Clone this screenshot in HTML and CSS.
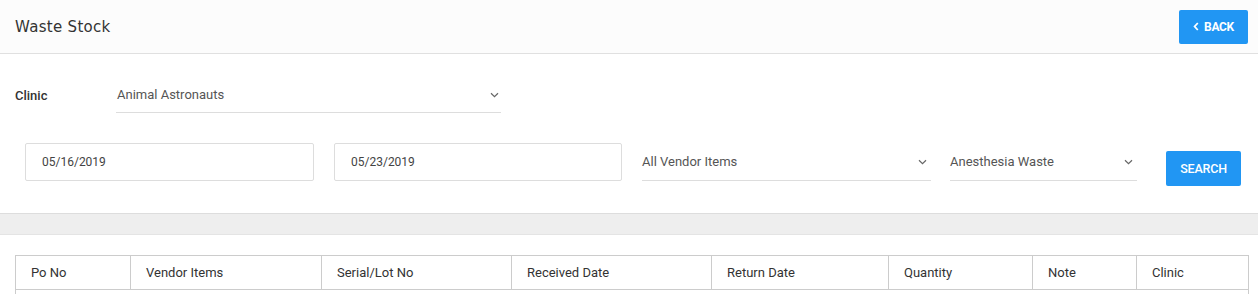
FILE: index.html
```html
<!DOCTYPE html>
<html>
<head>
<meta charset="utf-8">
<link rel="stylesheet" href="styles.css">
</head>
<body>
<header class="topbar">
  <h1 class="title">Waste Stock</h1>
  <button class="btn btn-back"><svg class="chev-left" width="6" height="9" viewBox="0 0 6 9"><path d="M4.8 1 L1.6 4.5 L4.8 8" fill="none" stroke="#fff" stroke-width="1.8"/></svg>BACK</button>
</header>
<section class="filters">
  <div class="clinic-row">
    <label class="clinic-label">Clinic</label>
    <div class="select select-clinic"><span>Animal Astronauts</span><svg class="chev" width="9" height="6" viewBox="0 0 9 6"><path d="M1 1.2 L4.5 4.6 L8 1.2" fill="none" stroke="#666" stroke-width="1.2"/></svg></div>
  </div>
  <div class="search-row">
    <div class="date-input">05/16/2019</div>
    <div class="date-input date-2">05/23/2019</div>
    <div class="select select-vendor"><span>All Vendor Items</span><svg class="chev" width="9" height="6" viewBox="0 0 9 6"><path d="M1 1.2 L4.5 4.6 L8 1.2" fill="none" stroke="#666" stroke-width="1.2"/></svg></div>
    <div class="select select-type"><span>Anesthesia Waste</span><svg class="chev" width="9" height="6" viewBox="0 0 9 6"><path d="M1 1.2 L4.5 4.6 L8 1.2" fill="none" stroke="#666" stroke-width="1.2"/></svg></div>
    <button class="btn btn-search">SEARCH</button>
  </div>
</section>
<div class="band"></div>
<section class="results">
  <table class="grid">
    <thead>
      <tr>
        <th class="c1">Po No</th>
        <th class="c2">Vendor Items</th>
        <th class="c3">Serial/Lot No</th>
        <th class="c4">Received Date</th>
        <th class="c5">Return Date</th>
        <th class="c6">Quantity</th>
        <th class="c7">Note</th>
        <th class="c8">Clinic</th>
      </tr>
    </thead>
    <tbody>
      <tr><td colspan="8"></td></tr>
    </tbody>
  </table>
</section>
</body>
</html>
```

FILE: styles.css
```css
* { box-sizing: border-box; }
html, body { margin: 0; padding: 0; background: #fff; }
body { font-family: Roboto, "Noto Sans", sans-serif; font-size: 13px; color: #333; }

.topbar {
  height: 54px;
  background: #fcfcfc;
  border-bottom: 1px solid #e0e0e0;
  display: flex;
  align-items: center;
  justify-content: space-between;
  padding: 0 10px 0 15px;
}
.title {
  margin: 0;
  font-family: "DejaVu Sans", sans-serif;
  font-weight: normal;
  font-size: 15px;
  color: #333;
  letter-spacing: 0.3px;
  position: relative;
  top: 0;
}
.btn {
  border: 0;
  background: #2196f3;
  color: #fff;
  font-family: Roboto, sans-serif;
  font-weight: 700;
  font-size: 12px;
  border-radius: 2px;
  cursor: pointer;
  display: inline-flex;
  align-items: center;
  justify-content: center;
}
.btn-back {
  width: 69px;
  height: 34px;
  margin-top: 0;
  gap: 5px;
  padding: 0;
  letter-spacing: -0.3px;
}
.filters { padding: 24px 0 27px; }
.clinic-row {
  display: flex;
  align-items: stretch;
  padding-left: 15px;
  height: 35px;
}
.clinic-label {
  width: 101px;
  font-weight: 500;
  display: flex;
  align-items: center;
  font-size: 13px;
  color: #333;
}
.select {
  display: flex;
  align-items: center;
  justify-content: space-between;
  border-bottom: 1px solid #ddd;
  color: #555;
  font-size: 13px;
}
.select-clinic { width: 385px; padding: 0 1px 1px 1px; }
.select-clinic .chev { margin-right: 1px; }
.search-row {
  display: flex;
  align-items: flex-start;
  margin-top: 30px;
  padding-left: 25px;
}
.date-input {
  width: 289px;
  height: 38px;
  border: 1px solid #ddd;
  border-radius: 2px;
  padding: 0 16px;
  display: flex;
  align-items: center;
  color: #444;
  font-size: 12px;
}
.date-2 { margin-left: 20px; width: 288px; }
.select-vendor { width: 289px; height: 38px; margin-left: 20px; padding-right: 4px; }
.select-type { width: 187px; height: 38px; margin-left: 19px; padding-right: 4px; }
.btn-search {
  width: 75px;
  height: 35px;
  margin-left: 29px;
  margin-top: 8px;
  font-size: 12.5px;
  font-weight: 500;
  letter-spacing: -0.2px;
}
.band {
  height: 22px;
  background: #eee;
  border-top: 1px solid #ddd;
  border-bottom: 1px solid #e4e4e4;
}
.results { padding: 20px 10px 0 15px; }
.grid {
  width: 1233px;
  border-collapse: collapse;
  table-layout: fixed;
}
.grid th {
  text-align: left;
  font-weight: normal;
  height: 34px;
  padding: 0 15px;
  border: 1px solid #ccc;
  color: #333;
  font-size: 13px;
}
.grid td { height: 10px; border: 1px solid #ccc; }
.c1 { width: 115px; }
.c2 { width: 191px; }
.c3 { width: 190px; }
.c4 { width: 200px; }
.c5 { width: 177px; }
.c6 { width: 144px; }
.c7 { width: 104px; }
.c8 { width: 112px; }
```
